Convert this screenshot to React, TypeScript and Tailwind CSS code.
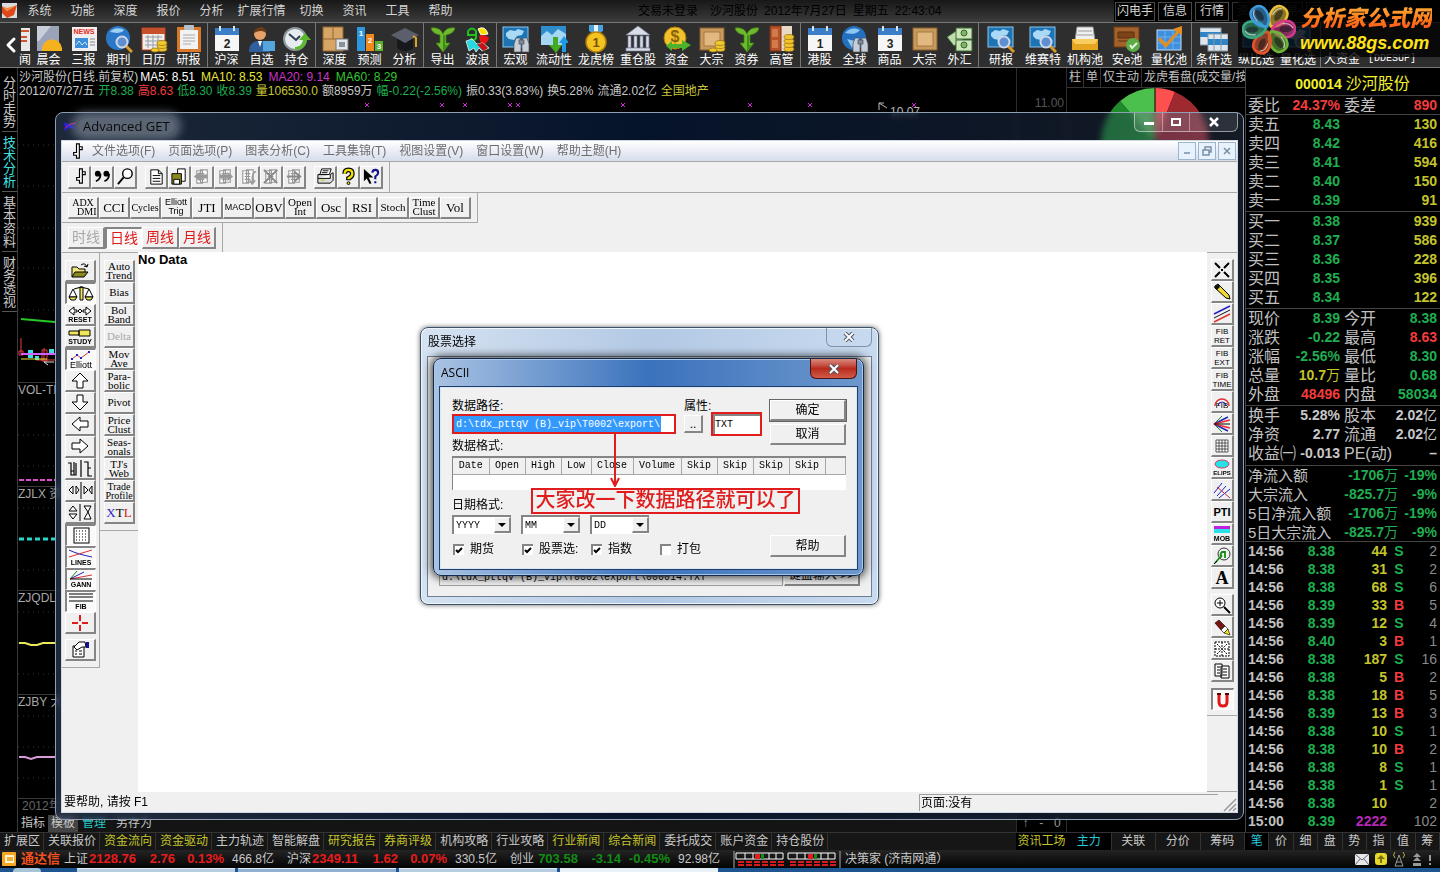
import type { ReactNode } from "react"
import clsx from "clsx"
import { ChevronLeft } from "lucide-react"

const RAISED = "border-t border-l border-r-2 border-b-2 border-t-white border-l-white border-r-[#858585] border-b-[#858585] bg-[#f0f0f0]"
const SUNKEN = "border-t-2 border-l-2 border-r border-b border-t-[#858585] border-l-[#858585] border-r-white border-b-white bg-[#fafafa]"
const SERIF = "font-[family-name:'Liberation_Serif','Noto_Sans_CJK_SC',serif]"
const MONO = "font-[family-name:'Liberation_Mono','Noto_Sans_CJK_SC',monospace]"

/* ---------- main toolbar icons (28 x 28) ---------- */

const Binoculars = () => (
  <g fill="#c8ced6" stroke="#4a525c" strokeWidth="0.7">
    <path d="M14 13h4l1 5v9h-7v-8z" />
    <path d="M21 13h4l2 6v8h-7v-9z" />
    <rect x="17" y="15" width="5" height="4" fill="#7f8a96" />
  </g>
)

const Magnifier = () => (
  <g fill="none">
    <path d="M21 21l6 6" stroke="#d89a28" strokeWidth="3" />
    <circle cx="17" cy="17" r="5.5" fill="#5f8fd0" stroke="#cdd8ea" strokeWidth="2" />
  </g>
)

const MapTile = () => (
  <>
    <rect x="1" y="2" width="25" height="20" fill="#1d74b4" stroke="#8cc4ec" />
    <path d="M4 8l4-3 5 1 3-2 6 2-2 4-5 1-3 4-5-1-3-3z" fill="#a9d9f5" />
  </>
)

const Coins = () => (
  <g fill="#f0c830" stroke="#93700d" strokeWidth="0.7">
    <ellipse cx="22" cy="24" rx="5" ry="2.5" />
    <ellipse cx="22" cy="21" rx="5" ry="2.5" />
    <ellipse cx="22" cy="18" rx="5" ry="2.5" />
    <ellipse cx="15" cy="25" rx="4" ry="2" />
  </g>
)

const Crate = () => (
  <>
    <rect x="2" y="3" width="24" height="22" fill="#c89a5e" stroke="#8a5e2c" />
    <rect x="6" y="7" width="16" height="14" fill="#e0b880" stroke="#a97a42" />
  </>
)

const Calendar = ({ day }: { day: string }) => (
  <>
    <rect x="2" y="4" width="24" height="22" fill="#f6f6f6" />
    <rect x="2" y="3" width="24" height="7" fill="#3d7ecb" />
    <path d="M7 1v5M21 1v5" stroke="#d8e6f6" strokeWidth="2" />
    <text x="14" y="23" textAnchor="middle" fontSize="12" fontWeight="bold" fill="#222">
      {day}
    </text>
  </>
)

const Sprout = () => (
  <>
    <path d="M2 3c6-1 10 1 12 6 2-5 6-7 12-6-1 4-4 6-9 7v8h4l-7 9-7-9h4v-8C6 9 3 7 2 3z" fill="#6fb92c" stroke="#3c7d14" strokeWidth="0.7" />
    <path d="M14 10h2v10h3l-5 6z" fill="#3e8f17" />
  </>
)

const toolIcons: Record<string, ReactNode> = {
  weather: (
    <>
      <rect x="2" y="1" width="22" height="25" fill="#9aa3b8" />
      <path d="M2 1h14L4 16H2z" fill="#c9cedb" />
      <path d="M7 26a10 10 0 0 1 20-3v3z" fill="#f5b21d" />
    </>
  ),
  news: (
    <>
      <rect x="2" y="2" width="25" height="24" fill="#efefef" />
      <rect x="4" y="3" width="21" height="7" fill="#fbe6e4" />
      <text x="14" y="9" textAnchor="middle" fontSize="7" fontWeight="bold" fill="#d9312a">NEWS</text>
      <rect x="5" y="13" width="13" height="10" fill="#3b8fd8" />
      <path d="M6 20l3-4 3 4 3-3 2 3" stroke="#cfe8fb" fill="none" />
      <path d="M20 14h5M20 17h5M20 20h5" stroke="#888" />
    </>
  ),
  globeSearch: (
    <>
      <circle cx="13" cy="13" r="12" fill="#2b78c8" />
      <path d="M5 7c4-5 11-4 14-2-3 4-9 3-14 2z" fill="#9ed0f4" />
      <Magnifier />
    </>
  ),
  calendarCoins: (
    <>
      <rect x="2" y="3" width="23" height="22" fill="#f3ede6" stroke="#b33b1e" />
      <rect x="2" y="3" width="23" height="6" fill="#c4512c" />
      <path d="M5 12h17M5 16h17M5 20h17M8 10v13M13 10v13M18 10v13" stroke="#8f9db0" />
      <Coins />
    </>
  ),
  clipboard: (
    <>
      <rect x="2" y="2" width="24" height="25" fill="#d9772a" />
      <rect x="5" y="5" width="18" height="19" fill="#f2f2f2" />
      <path d="M8 10h12M8 13h12M8 16h12M8 19h8" stroke="#aaa" />
      <rect x="9" y="0" width="10" height="5" rx="1" fill="#b9bfc6" />
    </>
  ),
  cal2: <Calendar day="2" />,
  cal1: <Calendar day="1" />,
  cal3: <Calendar day="3" />,
  person: (
    <>
      <path d="M1 27c0-9 5-11 11-11s10 3 10 11z" fill="#2f5f9c" />
      <path d="M10 16l2 6 2-6z" fill="#fff" />
      <circle cx="12" cy="9" r="6" fill="#e6a268" />
      <path d="M6 8c0-6 12-9 12 0-4-3-8-2-12 0z" fill="#6b3c17" />
      <rect x="15" y="16" width="12" height="10" fill="#54a6dd" />
    </>
  ),
  clock: (
    <>
      <circle cx="12" cy="14" r="11" fill="#e5ebee" stroke="#8b979d" strokeWidth="2" />
      <path d="M6 9l7 6 4-4" stroke="#2c3a55" strokeWidth="2" fill="none" />
      <path d="M12 25c7 0 11-4 12-10h4l-6-7-6 7h4c-1 5-4 7-8 7z" fill="#5bb82f" />
    </>
  ),
  cabinet: (
    <>
      <rect x="2" y="2" width="20" height="24" fill="#d7a566" stroke="#96672f" />
      <path d="M2 14h20M12 2v12" stroke="#96672f" />
      <rect x="15" y="14" width="12" height="11" fill="#e4e6e8" stroke="#777" />
      <rect x="18" y="17" width="6" height="5" fill="#8a9299" />
    </>
  ),
  bars123: (
    <>
      <rect x="1" y="2" width="8" height="24" fill="#2f96de" />
      <rect x="10" y="9" width="8" height="17" fill="#f08a1d" />
      <rect x="19" y="16" width="8" height="10" fill="#5cb030" />
      <g fontSize="8" fontWeight="bold" fill="#fff" textAnchor="middle">
        <text x="5" y="11">1</text>
        <text x="14" y="18">2</text>
        <text x="23" y="24">3</text>
      </g>
    </>
  ),
  cap: (
    <>
      <path d="M6 14v9c4 4 12 4 16 0v-9z" fill="#17181c" />
      <path d="M0 10L14 3l14 7-14 8z" fill="#5a5f6b" />
      <path d="M22 11l3 2v9" stroke="#d8a428" strokeWidth="2" fill="none" />
    </>
  ),
  sprout: <Sprout />,
  wave: (
    <>
      <path d="M4 6q4-5 8 0v7q-2 4-5 0M4 6v4h8" stroke="#1fc41f" strokeWidth="2" fill="none" />
      <path d="M14 4q7-4 10 5l-7 1z" fill="#ffe100" stroke="#fff" />
      <path d="M15 11q6-3 10 2-2 7-8 7z" fill="#e81414" />
      <path d="M2 16l6-2 5 5 6-1 6 5-7 3-3-3-3 4-2-4-5 3z" fill="#27d8e0" stroke="#fff" strokeWidth="0.7" />
      <path d="M13 19l6 7 5-3-5-5z" fill="#c81010" />
    </>
  ),
  mapBino: (
    <>
      <MapTile />
      <Binoculars />
    </>
  ),
  flow: (
    <>
      <rect x="1" y="1" width="25" height="19" fill="#2f8dcd" />
      <path d="M1 11l6-5 5 4 6-6 8 5v11H1z" fill="#a3d7f3" />
      <path d="M13 12h5v8h4l-6 8-7-8h4z" fill="#43ab22" />
      <path d="M22 27v-9h-3l5-7 5 7h-3v9z" fill="#1f9ae8" />
    </>
  ),
  medal: (
    <>
      <path d="M7 0h14v6l-7 4-7-4z" fill="#4aa3dd" />
      <path d="M12 0h4v9h-4z" fill="#e9f3fb" />
      <circle cx="14" cy="17" r="10" fill="#f3c321" stroke="#b88208" strokeWidth="1.5" />
      <text x="14" y="22" textAnchor="middle" fontSize="13" fontWeight="bold" fill="#7b5200">1</text>
    </>
  ),
  bank: (
    <g fill="#d8dde8" stroke="#727d96" strokeWidth="0.7">
      <path d="M14 1L2 10h24z" />
      <path d="M4 11h3v12H4zM10 11h3v12h-3zM16 11h3v12h-3zM22 11h3v12h-3z" />
      <path d="M2 23h24v3H2z" />
    </g>
  ),
  dollar: (
    <>
      <circle cx="12" cy="13" r="11" fill="#f1c22b" stroke="#a97b0a" />
      <text x="12" y="17" textAnchor="middle" fontSize="16" fontWeight="bold" fill="#8c6208">$</text>
      <path d="M3 21l6-5v3h10v-4l9 5-9 6v-3H9v3z" fill="#4fb22c" />
    </>
  ),
  crateCoins: (
    <>
      <Crate />
      <Coins />
    </>
  ),
  crate: <Crate />,
  door: (
    <>
      <rect x="2" y="1" width="22" height="25" fill="#e8d8c4" />
      <path d="M2 1h11v25H2z" fill="#b6532a" stroke="#7d3114" />
      <path d="M4 4h6v8H4zM4 15h6v8H4z" fill="#d17a4c" />
      <g fill="#f0c22c" stroke="#96700c" strokeWidth="0.7">
        <ellipse cx="21" cy="24" rx="5" ry="2.5" />
        <ellipse cx="21" cy="20" rx="5" ry="2.5" />
        <ellipse cx="21" cy="16" rx="5" ry="2.5" />
        <ellipse cx="21" cy="12" rx="5" ry="2.5" />
      </g>
    </>
  ),
  globeBino: (
    <>
      <circle cx="13" cy="13" r="12" fill="#2470c0" />
      <path d="M4 8c5-6 11-5 15-3-4 5-9 4-15 3zM6 14l8 2-3 7z" fill="#8dc6ef" />
      <Binoculars />
    </>
  ),
  money: (
    <g stroke="#376a2c">
      <path d="M1 12L16 2l6 9L8 21z" fill="#bfdcae" />
      <rect x="10" y="3" width="16" height="11" fill="#cfe6bd" />
      <rect x="10" y="15" width="16" height="11" fill="#cfe6bd" />
      <circle cx="18" cy="8" r="3" fill="#7fb469" />
      <circle cx="18" cy="20" r="3" fill="#7fb469" />
    </g>
  ),
  mapSearch: (
    <>
      <MapTile />
      <Magnifier />
    </>
  ),
  tray: (
    <>
      <path d="M6 2h16l2 14H4z" fill="#f0f0f0" stroke="#999" />
      <path d="M7 6h14M6 10h16" stroke="#999" />
      <path d="M1 14h26v11H1z" fill="#e6a521" />
      <path d="M1 14h26l-3 5H4z" fill="#f8cd5c" />
    </>
  ),
  board: (
    <>
      <rect x="1" y="2" width="25" height="20" fill="#a3612c" stroke="#6d3a12" />
      <path d="M5 7h16v6H5zM5 16h10" stroke="#5a2e0d" fill="#7d4419" />
      <circle cx="20" cy="20" r="7" fill="#5cab46" />
      <path d="M17 20l2 3 5-5" stroke="#e8f6e0" strokeWidth="2" fill="none" />
    </>
  ),
  quant: (
    <>
      <rect x="2" y="5" width="24" height="20" fill="#3e8fe0" stroke="#c8def4" />
      <path d="M2 12h24M2 18h24M10 5v20M18 5v20" stroke="#6fb0ee" />
      <path d="M5 12l6 6L21 7l-3-3 9-3v9l-3-2-13 15-8-8z" fill="#e08e22" />
    </>
  ),
  sheets: (
    <>
      <rect x="0" y="3" width="21" height="17" fill="#dfe6ec" stroke="#8898a8" />
      <rect x="0" y="7" width="21" height="5" fill="#2f84c6" />
      <rect x="8" y="9" width="20" height="17" fill="#dfe6ec" stroke="#8898a8" />
      <rect x="8" y="14" width="20" height="6" fill="#2f84c6" />
      <path d="M14 9v17M21 9v17" stroke="#8898a8" />
    </>
  ),
}

type Tool = [icon: string, label: string]

const toolGroups: { wide?: boolean; tools: Tool[] }[] = [
  { tools: [["weather", "晨会"], ["news", "三报"], ["globeSearch", "期刊"], ["calendarCoins", "日历"], ["clipboard", "研报"]] },
  { tools: [["cal2", "沪深"], ["person", "自选"], ["clock", "持仓"]] },
  { tools: [["cabinet", "深度"], ["bars123", "预测"], ["cap", "分析"]] },
  { tools: [["sprout", "导出"], ["wave", "波浪"]] },
  {
    tools: [
      ["mapBino", "宏观"], ["flow", "流动性"], ["medal", "龙虎榜"], ["bank", "重仓股"],
      ["dollar", "资金"], ["crateCoins", "大宗"], ["sprout", "资券"], ["door", "高管"],
    ],
  },
  { tools: [["cal1", "港股"], ["globeBino", "全球"], ["cal3", "商品"], ["crate", "大宗"], ["money", "外汇"]] },
  { wide: true, tools: [["mapSearch", "研报"], ["mapSearch", "维赛特"], ["tray", "机构池"], ["board", "安e池"], ["quant", "量化池"]] },
  { wide: true, tools: [["sheets", "条件选"], ["mapSearch", "纵比选"], ["mapSearch", "量化选"]] },
]

function ToolButton({ icon, label, wide }: { icon: string; label: string; wide?: boolean }) {
  return (
    <button className={clsx("flex shrink-0 flex-col items-center pt-[2px]", wide || label.length > 2 ? "w-[42px]" : "w-[35px]")}>
      <svg viewBox="0 0 28 28" className="h-7 w-7">
        {toolIcons[icon]}
      </svg>
      <span className="h-[14px] whitespace-nowrap leading-[14px]">{label}</span>
    </button>
  )
}

function MenuBar() {
  const menus = ["系统", "功能", "深度", "报价", "分析", "扩展行情", "切换", "资讯", "工具", "帮助"]
  return (
    <header className="flex h-[22px] items-center bg-linear-to-b from-[#181818] to-[#3c3c3c] text-[#d4d4d4]">
      <svg viewBox="0 0 16 16" className="ml-[2px] h-4 w-4">
        <rect width="15" height="15" fill="#d9dde0" />
        <path d="M0 3l5 5 10-6-3 10-7 3-5-5z" fill="#e0481a" />
        <path d="M0 3l5 5 10-6-10 3z" fill="#f58a3a" />
      </svg>
      <nav className="flex">
        {menus.map((menu) => (
          <button key={menu} className={menu.length > 2 ? "w-[57px]" : "w-[43px]"}>
            {menu}
          </button>
        ))}
      </nav>
      <div className="ml-[176px] flex flex-1 gap-[6px] whitespace-nowrap text-black">
        <span className="mr-[6px]">交易未登录</span>
        <span>沙河股份</span>
        <span>2012年7月27日</span>
        <span>星期五</span>
        <span>22:43:04</span>
      </div>
      <div className="flex h-full w-[326px] items-center gap-[3px] bg-black pl-px">
        {["闪电手", "信息", "行情"].map((label) => (
          <button key={label} className={clsx("h-[19px] border border-[#4a4a4a] leading-[17px]", label.length > 2 ? "px-px" : "px-1")}>
            {label}
          </button>
        ))}
        {["资讯", "交易", "网站"].map((label) => (
          <button key={label} className="h-[19px] border border-[#333] px-1 leading-[17px] text-[#444]">
            {label}
          </button>
        ))}
      </div>
    </header>
  )
}

function Toolbar() {
  return (
    <div className="flex h-[46px] overflow-hidden border-y border-[#777] bg-[#2e2e2e] text-white">
      <button aria-label="Scroll left" className="flex w-[17px] shrink-0 items-center justify-center pl-1">
        <ChevronLeft className="h-6 w-6 shrink-0" strokeWidth={3} />
      </button>
      <div className="flex w-[14px] shrink-0 flex-col items-end overflow-hidden pt-[2px]">
        <svg viewBox="18 0 10 28" className="h-7 w-[10px]">
          <rect x="18" y="3" width="9" height="23" fill="#e8e8e8" />
          <path d="M18 6h8M18 12h6M18 16h6" stroke="#d2542c" strokeWidth="2" />
        </svg>
        <span className="h-[14px] leading-[14px]">闻</span>
      </div>
      {toolGroups.map((group, i) => (
        <div key={i} className="mr-px flex border-r border-[#777] pr-px">
          {group.tools.map(([icon, label], j) => (
            <ToolButton key={j} icon={icon} label={label} wide={group.wide} />
          ))}
        </div>
      ))}
      <div className="flex items-end gap-2 whitespace-nowrap pb-px pl-[2px] leading-[14px]">
        <span>大资金</span>
        <span className={clsx(MONO, "text-[10px]")}>[DDESUP]</span>
      </div>
    </div>
  )
}

function SiteLogo() {
  const petals = [
    { angle: 35, color: "#e8c03a" },
    { angle: 90, color: "#d4388a" },
    { angle: 145, color: "#6fb53a" },
    { angle: 205, color: "#e5532c" },
    { angle: 268, color: "#3aa87c" },
    { angle: 325, color: "#3d9be0" },
  ]
  return (
    <div className="absolute top-0 right-0 flex h-[57px] w-[202px] items-center gap-1 bg-black/80 pl-1">
      <svg viewBox="-26 -26 52 52" className="h-[54px] w-[54px] shrink-0">
        {petals.map(({ angle, color }) => (
          <g key={color} transform={`rotate(${angle})`}>
            <path d="M0-3C-10-9-11-25 0-25s10 16 0 22z" fill={color} fillOpacity="0.6" stroke={color} strokeWidth="2.5" />
            <ellipse cy="-16" rx="3" ry="6" fill="#1a1a1a" fillOpacity="0.6" />
            <path d="M-5-13q-1-8 4-10" fill="none" stroke="#fff" strokeOpacity="0.6" strokeWidth="1.2" />
          </g>
        ))}
      </svg>
      <div className="whitespace-nowrap">
        <div className="bg-linear-to-b from-[#ffb03a] via-[#ff7a1a] to-[#ff4a1a] bg-clip-text text-[22px] leading-7 font-black text-transparent italic">
          分析家公式网
        </div>
        <div className="text-[18px] leading-5 font-bold text-[#ffe21a] italic">www.88gs.com</div>
      </div>
    </div>
  )
}

/* ---------- chart side ---------- */

function SideTabs() {
  const tabs = ["分时走势", "技术分析", "基本资料", "财务透视"]
  return (
    <nav className="flex w-[18px] shrink-0 flex-col border-r border-[#3a3a3a] pt-1 pl-[2px]">
      {tabs.map((tab, i) => (
        <button
          key={tab}
          className={clsx(
            "flex h-[60px] flex-col items-center justify-center border-b border-[#555] text-[13px] leading-[13px]",
            i === 1 ? "text-[#3fe0e0]" : "text-[#c8c8c8]",
          )}
        >
          {[...tab].map((char) => (
            <span key={char}>{char}</span>
          ))}
        </button>
      ))}
    </nav>
  )
}

const crosses = [367, 442, 465, 510, 518, 623, 750, 810, 914]

function IndicatorPane({ title, children }: { title: string; children?: ReactNode }) {
  return (
    <section className="h-[104px] shrink-0 border-t border-[#3a3a3a] text-[#a8a8a8]">
      <h2 className="h-4 overflow-hidden leading-[14px] whitespace-nowrap">{title}</h2>
      <svg className="h-[86px] w-full">
        <path d="M0 5h1000M0 36h1000M0 67h1000" stroke="#333" strokeDasharray="1 4" />
        {children}
      </svg>
    </section>
  )
}

function ChartArea() {
  return (
    <div className="flex min-w-0 flex-1 flex-col pt-[2px]">
      <div className="flex h-[14px] gap-[6px] pl-px leading-[14px] whitespace-nowrap text-white">
        <span className="-mr-1 text-[#c8c8c8]">沙河股份(日线.前复权)</span>
        <span>MA5: 8.51</span>
        <span className="text-[#e8e83a]">MA10: 8.53</span>
        <span className="text-[#c832c8]">MA20: 9.14</span>
        <span className="text-[#32c832]">MA60: 8.29</span>
      </div>
      <div className="flex h-[14px] gap-1 pl-px leading-[14px] whitespace-nowrap text-[#c8c8c8]">
        <span>2012/07/27/五</span>
        <span className="text-[#1fae50]">开8.38</span>
        <span className="text-[#f03c3c]">高8.63</span>
        <span className="text-[#1fae50]">低8.30</span>
        <span className="text-[#1fae50]">收8.39</span>
        <span className="text-[#c8c83a]">量106530.0</span>
        <span>额8959万</span>
        <span className="text-[#1fae50]">幅-0.22(-2.56%)</span>
        <span>振0.33(3.83%)</span>
        <span>换5.28%</span>
        <span>流通2.02亿</span>
        <span className="text-[#c8c83a]">全国地产</span>
      </div>
      <svg className="w-full flex-1 overflow-hidden">
        {crosses.map((x) => (
          <path key={x} d={`M${x - 20} 5l4 4m0-4l-4 4`} stroke="#d428d4" />
        ))}
        <path d="M861 12V5l8 5m-8-5h5" stroke="#bbb" fill="none" />
        <text x="872" y="18" fontSize="12" fill="#b8b8b8">10.07</text>
        <path d="M0 47h1000M0 88h1000M0 130h1000M0 170h1000M0 212h1000" stroke="#333" strokeDasharray="1 4" />
        <path d="M3 221l34 3" stroke="#28c828" strokeWidth="2" />
        <path d="M3 240v16M26 250v14M18 262h19" stroke="#e83c3c" />
        <path d="M1 253h4v4H1zM24 252h5v11h-5z" fill="none" stroke="#e83c3c" />
        <path d="M10 252h5v8h-5zM31 251h5v4h-5zM17 258h4v4h-4z" fill="#3fe0e0" />
        <path d="M3 256h34" stroke="#d060ff" strokeWidth="2" />
        <path d="M3 261h26" stroke="#e8e83a" />
        <path d="M26 264l4 3m-4-3h10" stroke="#ddd" />
      </svg>
      <IndicatorPane title="VOL-TI">
        <path d="M1 81h36" stroke="#e04ad0" strokeWidth="2" strokeDasharray="5 2" />
      </IndicatorPane>
      <IndicatorPane title="ZJLX 资">
        <path d="M1 36h36" stroke="#27d8c8" strokeWidth="3" strokeDasharray="5 3" />
      </IndicatorPane>
      <IndicatorPane title="ZJQDL">
        <path d="M1 36h6l6 2h6l6-2h12" stroke="#e8e85a" strokeWidth="2" fill="none" />
      </IndicatorPane>
      <IndicatorPane title="ZJBY 大">
        <path d="M1 46h6l6 2 6-2h18" stroke="#d89ad8" strokeWidth="2" fill="none" />
      </IndicatorPane>
      <div className="h-[17px] shrink-0 border-t border-[#3a3a3a] pl-1 leading-[15px] text-[#666]">2012年</div>
      <div className="flex h-[17px] shrink-0 bg-[#141414] leading-[15px] text-[#c8c8c8]">
        <button className="w-[30px] bg-black">指标</button>
        <button className="w-[30px] bg-[#444]">模板</button>
        <button className="w-[32px] text-[#27c8c8]">管理</button>
        <button className="px-[6px]">另存为</button>
      </div>
    </div>
  )
}

function SidePanel() {
  return (
    <div className="flex shrink-0">
      <div className="flex w-[51px] flex-col border-r border-l border-[#2c2c2c] pt-[27px] text-[#555]">
        <div className="pr-[2px] text-right leading-4">11.00</div>
        <div className="mt-auto flex h-[17px] justify-around leading-[17px] text-[#999]">
          <button>↑</button>
          <button>-</button>
          <button>0</button>
        </div>
      </div>
      <div className="w-[178px] overflow-hidden">
        <div className="flex h-5 border-b border-[#333] leading-[19px] whitespace-nowrap text-[#c0c0c0]">
          {["柱", "单", "仅主动", "龙虎看盘(成交量/按"].map((tab) => (
            <button key={tab} className="shrink-0 border-r border-[#333] px-[2px]">
              {tab}
            </button>
          ))}
        </div>
        <svg viewBox="0 0 178 110" className="w-full">
          <path d="M88 54V0A54 54 0 0 0 53 13z" fill="#4cc04c" />
          <path d="M88 54L53 13A54 54 0 0 0 88 108z" fill="#1e8a2c" />
          <path d="M88 54V0a54 54 0 0 1 20 4z" fill="#ff5050" />
          <path d="M88 54l20-50a54 54 0 0 1-20 104z" fill="#9e2a30" />
          <path d="M88 0v108" stroke="#000" />
        </svg>
      </div>
    </div>
  )
}

/* ---------- quote panel ---------- */

const G = "text-[#1fae50]"
const Y = "text-[#c4c42c]"
const R = "text-[#f43c3c]"
const W = "text-[#c8c8c8]"

const asks = [["卖五", "8.43", "130"], ["卖四", "8.42", "416"], ["卖三", "8.41", "594"], ["卖二", "8.40", "150"], ["卖一", "8.39", "91"]]
const bids = [["买一", "8.38", "939"], ["买二", "8.37", "586"], ["买三", "8.36", "228"], ["买四", "8.35", "396"], ["买五", "8.34", "122"]]

type Pair = [string, string, string, string, string, string]

const summary: Pair[] = [
  ["现价", "8.39", G, "今开", "8.38", G],
  ["涨跌", "-0.22", G, "最高", "8.63", R],
  ["涨幅", "-2.56%", G, "最低", "8.30", G],
  ["总量", "10.7万", Y, "量比", "0.68", G],
  ["外盘", "48496", R, "内盘", "58034", G],
]
const basics: Pair[] = [
  ["换手", "5.28%", W, "股本", "2.02亿", W],
  ["净资", "2.77", W, "流通", "2.02亿", W],
  ["收益㈠", "-0.013", W, "PE(动)", "–", W],
]
const flows = [
  ["净流入额", "-1706万", "-19%"],
  ["大宗流入", "-825.7万", "-9%"],
  ["5日净流入额", "-1706万", "-19%"],
  ["5日大宗流入", "-825.7万", "-9%"],
]
const ticks = [
  ["14:56", "8.38", "44", "S", "2"],
  ["14:56", "8.38", "31", "S", "2"],
  ["14:56", "8.38", "68", "S", "6"],
  ["14:56", "8.39", "33", "B", "5"],
  ["14:56", "8.39", "12", "S", "4"],
  ["14:56", "8.40", "3", "B", "1"],
  ["14:56", "8.38", "187", "S", "16"],
  ["14:56", "8.38", "5", "B", "2"],
  ["14:56", "8.38", "18", "B", "5"],
  ["14:56", "8.39", "13", "B", "3"],
  ["14:56", "8.38", "10", "S", "1"],
  ["14:56", "8.38", "10", "B", "2"],
  ["14:56", "8.38", "8", "S", "1"],
  ["14:56", "8.38", "1", "S", "1"],
  ["14:56", "8.38", "10", "", "2"],
  ["15:00", "8.39", "2222", "", "102"],
]

// bold digits, with the unit (万, 亿) in regular weight
function Amount({ value, className }: { value: string; className?: string }) {
  const unit = /[万亿]$/.test(value) ? value.slice(-1) : ""
  return (
    <span className={clsx("text-[14px]", className)}>
      <b>{unit ? value.slice(0, -1) : value}</b>
      {unit}
    </span>
  )
}

function PairRow({ row: [label, value, color, label2, value2, color2] }: { row: Pair }) {
  return (
    <div className="flex h-[19px] items-center leading-[19px] whitespace-nowrap">
      <span className="text-[16px]">{label}</span>
      <Amount value={value} className={clsx("ml-auto", color)} />
      <span className="flex w-[97px] items-center pl-1">
        <span className="text-[16px]">{label2}</span>
        <Amount value={value2} className={clsx("ml-auto", color2)} />
      </span>
    </div>
  )
}

function OrderRows({ rows }: { rows: string[][] }) {
  return (
    <table className="w-full border-collapse">
      <tbody>
        {rows.map(([label, price, volume]) => (
          <tr key={label} className="h-[19px] leading-[19px]">
            <th scope="row" className="w-[42px] p-0 text-left text-[16px] font-normal">{label}</th>
            <td className={clsx("w-[50px] p-0 text-right text-[14px] font-bold", G)}>{price}</td>
            <td className={clsx("p-0 text-right text-[14px] font-bold", Y)}>{volume}</td>
          </tr>
        ))}
      </tbody>
    </table>
  )
}

function QuotePanel() {
  return (
    <aside className="w-[195px] shrink-0 divide-y divide-[#444] border-l border-[#444] text-[#c0c0c0] [&>*]:pr-[3px] [&>*]:pl-[2px]">
      <h1 className="flex h-7 items-center justify-center gap-1 pt-1 text-[#f0f02c]">
        <span className="ml-5 text-[14px] font-bold">000014</span>
        <span className="text-[16px]">沙河股份</span>
      </h1>
      <PairRow row={["委比", "24.37%", R, "委差", "890", R]} />
      <div className="h-[97px]"><OrderRows rows={asks} /></div>
      <div className="h-[97px]"><OrderRows rows={bids} /></div>
      <div className="h-[97px]">
        {summary.map((row) => <PairRow key={row[0]} row={row} />)}
      </div>
      <div className="h-[60px]">
        {basics.map((row) => <PairRow key={row[0]} row={row} />)}
      </div>
      <div className="h-[76px]">
        {flows.map(([label, amount, percent]) => (
          <div key={label} className="flex h-[19px] items-center leading-[19px] whitespace-nowrap">
            <span className="text-[15px]">{label}</span>
            <Amount value={amount} className={clsx("ml-auto", G)} />
            <Amount value={percent} className={clsx("w-[39px] text-right", G)} />
          </div>
        ))}
      </div>
      <div>
        <table className="w-full border-collapse text-[14px] font-bold">
          <tbody>
            {ticks.map(([time, price, volume, side, count], i) => (
              <tr key={i} className="h-[18px] leading-[18px]">
                <td className="w-[43px] p-0">{time}</td>
                <td className={clsx("w-[44px] p-0 text-right", G)}>{price}</td>
                <td className={clsx("w-[52px] p-0 text-right", time === "15:00" ? "text-[#b428b4]" : Y)}>{volume}</td>
                <td className={clsx("w-[24px] p-0 text-center", side === "B" ? R : G)}>{side}</td>
                <td className="p-0 text-right font-normal text-[#8a8a8a]">{count}</td>
              </tr>
            ))}
          </tbody>
        </table>
      </div>
    </aside>
  )
}

/* ---------- footer ---------- */

const footerTabs = [
  "扩展区", "关联报价", "资金流向", "资金驱动", "主力轨迹", "智能解盘", "研究报告", "券商评级",
  "机构攻略", "行业攻略", "行业新闻", "综合新闻", "委托成交", "账户资金", "持仓股份",
]
const highlighted = ["资金流向", "资金驱动", "研究报告", "券商评级", "行业新闻", "综合新闻"]

const indices = [
  { name: "上证", value: "2128.76", change: "2.76", percent: "0.13%", amount: "466.8亿", up: true },
  { name: "沪深", value: "2349.11", change: "1.62", percent: "0.07%", amount: "330.5亿", up: true },
  { name: "创业", value: "703.58", change: "-3.14", percent: "-0.45%", amount: "92.98亿", up: false },
]

function Footer() {
  return (
    <footer className="text-[#c8c8c8]">
      <div className="flex h-[18px] border-t border-[#333] bg-[#161616] leading-[15px] whitespace-nowrap">
        <nav className="flex flex-1">
          {footerTabs.map((tab) => (
            <button
              key={tab}
              className={clsx("border-r border-[#333] pr-[3px] pl-1", highlighted.includes(tab) && "text-[#c4c42c]")}
            >
              {tab}
            </button>
          ))}
        </nav>
        <button className="w-[51px] bg-black text-[#c4c42c]">资讯工场</button>
        <div className="flex w-[178px]">
          {["主力", "关联", "分价", "筹码"].map((tab, i) => (
            <button key={tab} className={clsx("flex-1 border-r border-[#333]", i === 0 && "bg-black text-[#27c8d8]")}>
              {tab}
            </button>
          ))}
        </div>
        <div className="flex w-[195px]">
          {["笔", "价", "细", "盘", "势", "指", "值", "筹"].map((tab, i) => (
            <button key={tab} className={clsx("flex-1 border-r border-[#333]", i === 0 && "bg-black text-[#27c8d8]")}>
              {tab}
            </button>
          ))}
        </div>
      </div>
      <div className="flex h-[18px] items-center bg-linear-to-b from-[#242424] to-[#050505] leading-4 whitespace-nowrap">
        <svg viewBox="0 0 14 14" className="ml-[2px] h-[14px] w-[14px]">
          <rect width="14" height="14" rx="1" fill="#f5a623" />
          <rect x="3" y="3" width="9" height="8" fill="#fff3d0" />
          <rect x="5" y="5" width="6" height="4" fill="#f0b040" />
        </svg>
        <strong className="mr-1 ml-[5px] text-[13px] text-[#f4511e]">通达信</strong>
        {indices.map(({ name, value, change, percent, amount, up }) => (
          <div key={name} className="flex w-[223px]">
            <span className="w-[25px]">{name}</span>
            <span className={clsx("flex text-[13px] font-bold", up ? "text-[#e81c1c]" : "text-[#128c12]")}>
              <span className="w-[46px] text-center">{value}</span>
              <span className="w-[40px] text-right">{change}</span>
              <span className="w-[49px] text-right">{percent}</span>
            </span>
            <span className="ml-2">{amount}</span>
          </div>
        ))}
        <svg viewBox="0 0 108 18" className="h-[18px] w-[108px]">
          <path d="M1 1v17M107 1v17" stroke="#aaa" />
          <path d="M3 3h47v6h-47zM55 3h47v6h-47zM12 3v6M20 3v6M36 3v6M43 3v6M64 3v6M72 3v6M88 3v6M95 3v6" fill="none" stroke="#fff" />
          <path d="M22 4h5v5h-5zM75 4h5v5h-5z" fill="#e81c1c" />
          <path d="M28 4h3v5h-3zM81 4h3v5h-3z" fill="#128c12" />
          <path d="M5 12h46M5 15h46M57 12h46M57 15h46" stroke="#d41c1c" strokeWidth="2" strokeDasharray="6 2" />
        </svg>
        <span className="ml-1">决策家 (济南网通）</span>
        <svg viewBox="0 0 84 18" className="mr-px ml-auto h-[18px] w-[84px]">
          <rect y="4" width="14" height="11" fill="#e8e8e8" />
          <path d="M0 4l7 6 7-6M0 15l5-6M14 15l-5-6" stroke="#667" fill="none" />
          <rect x="20" y="3" width="12" height="12" rx="3" fill="#e8d82c" />
          <path d="M26 5l4 4h-3v4h-2V9h-3z" fill="#7a7010" />
          <path d="M44 5l-4 11h8zM41 12h6" stroke="#999" fill="none" />
          <path d="M40 2q-3 3 0 6M48 2q3 3 0 6" stroke="#b8b040" fill="none" />
          <path d="M62 3l4 4h-8zM62 7l4 4h-8zM58 13h8v3h-8z" fill="#999" />
          <path d="M74 5h2v6h-2zM74 13h2v2h-2z" fill="#999" />
        </svg>
      </div>
      <div className="flex h-1 bg-[#1d5590]">
        <div className="ml-[13px] h-1 w-7 rounded-t-full bg-[#a8c4d8]" />
        <div className="ml-9 flex flex-1 gap-[3px] *:h-1 *:border-t *:border-[#e0ecf6]">
          <div className="w-[158px] bg-[#b8cde2]" />
          <div className="w-[158px] bg-[#8fb0d0]" />
          <div className="w-[158px] bg-[#b8cde2]" />
          <div className="w-[158px] bg-[#e8f0f8]" />
        </div>
      </div>
    </footer>
  )
}

/* ---------- Advanced GET window ---------- */

const Pin = () => <path d="M10 2h3v15h-3v-3H7v-3h3zM13 5h3v3h-3z" fill="#fff" stroke="#000" strokeWidth="1.2" />
const Pages = () => (
  <g fill="#fff" stroke="#999" strokeWidth="1.2">
    <path d="M4 4h6v13H4zM8 3h7v13H8z" />
    <path d="M6 7h6M6 10h6M6 13h6" />
  </g>
)

const barIcons: ReactNode[][] = [
  [
    <Pin />,
    <g fill="#000"><circle cx="5" cy="7" r="3" /><circle cx="14" cy="7" r="3" /><path d="M8 7q0 6-5 8M17 7q0 6-5 8" fill="none" stroke="#000" strokeWidth="1.8" /></g>,
    <g fill="#fff" stroke="#000" strokeWidth="1.5"><circle cx="12" cy="7" r="5" /><path d="M8 11l-6 7" strokeWidth="2" /></g>,
  ],
  [
    <path d="M4 3h8l4 4v11H4zM12 3v4h4M6 9h8M6 12h8M6 15h8" fill="#fff" stroke="#000" />,
    <g stroke="#000"><path d="M8 2h8v13H8z" fill="#fff" /><path d="M2 7h10v11H2z" fill="#8a8a20" /><path d="M4 13h6v5H4z" fill="#fff" /></g>,
    <g><Pages /><path d="M1 10l6-5v3h8v4H7v3z" fill="#999" /></g>,
    <g><Pages /><path d="M18 10l-6-5v3H4v4h8v3z" fill="#999" /></g>,
    <g><Pages /><path d="M18 5q-5 0-4 12M11 14l3 4 3-4" fill="none" stroke="#999" strokeWidth="1.5" /></g>,
    <g><Pages /><path d="M2 3l14 14M16 3L2 17" stroke="#888" strokeWidth="2" /></g>,
    <g><Pages /><path d="M2 10h13M10 5l6 5-6 5" fill="none" stroke="#888" strokeWidth="2" /></g>,
  ],
  [
    <g fill="#fff" stroke="#000"><path d="M6 2h10l-2 6H4z" /><path d="M2 8h13l3-2v8l-3 3H2z" fill="#ddd" /><path d="M2 12h13v-4M7 4h6M6 6h6" /><path d="M5 14h4" stroke="#c8c800" /></g>,
    <g fill="none"><path d="M6 7q0-4 4-4t4 4q0 3-4 5v2" stroke="#000" strokeWidth="5" /><path d="M6 7q0-4 4-4t4 4q0 3-4 5v1" stroke="#f0e000" strokeWidth="2.5" /><circle cx="10" cy="17" r="1.5" fill="#f0e000" stroke="#000" /></g>,
    <g><path d="M2 2v13l3-3 3 6 2-1-3-6h5z" fill="#000" /><path d="M11 6q0-3 3-3t3 3q0 2-3 4v3M14 15v2" fill="none" stroke="#10108c" strokeWidth="2.2" /></g>,
  ],
]

const studies = ["ADX\n   DMI", "CCI", "Cycles", "Elliott\nTrig", "JTI", "MACD", "OBV", "Open\nInt", "Osc", "RSI", "Stoch", "Time\nClust", "Vol"]
const periods = ["时线", "日线", "周线", "月线"]
const studyColumn = [
  "Auto\nTrend", "Bias", "Bol\nBand", "Delta", "Mov\nAve", "Para-\nbolic", "Pivot", "Price\nClust", "Seas-\nonals", "TJ's\nWeb", "Trade\nProfile", "XTL",
]

const leftTools: { name: string; caption?: string; pressed?: boolean; icon: ReactNode }[] = [
  { name: "Open", icon: <g stroke="#000"><path d="M5 15V5h5l2 2h6v3" fill="#f0e878" /><path d="M5 15l3-5h13l-4 5z" fill="#8a8a20" /><path d="M14 3q4-3 6 2m-3-1l3 1 1-3" fill="none" /></g> },
  { name: "Scales", pressed: true, icon: <g stroke="#000" fill="#f0e85a"><path d="M12 2h3v13h-3zM6 4l7-2 8 2" /><path d="M5 4l-4 8h8zM21 4l-4 8h8z" fill="#fff" /><path d="M1 12h8l-2 3H3zM17 12h8l-2 3h-4z" /></g> },
  { name: "Reset", caption: "RESET", icon: <path d="M7 1L2 5l5 4V6h3V4H7zM19 1l5 4-5 4V6h-3V4h3zM11 5l2-2 2 2-2 2z" fill="#fff" stroke="#000" /> },
  { name: "Study", caption: "STUDY", icon: <path d="M2 3h10v4H2zM12 2h11v6H12z" fill="#f0e85a" stroke="#000" /> },
  { name: "Elliott", caption: "Elliott", pressed: true, icon: <g><path d="M4 8l5-4 4 3 8-6" stroke="#e03030" fill="none" /><path d="M3 7h2v2H3zM8 3h2v2H8zM12 6h2v2h-2zM20 0h2v2h-2z" fill="#2020c0" /></g> },
  { name: "Up", icon: <path d="M13 1l8 8h-5v7h-6V9H5z" fill="#fff" stroke="#000" /> },
  { name: "Down", icon: <path d="M13 16L5 8h5V1h6v7h5z" fill="#fff" stroke="#000" /> },
  { name: "Left", icon: <path d="M5 8l8-7v4h8v6h-8v4z" fill="#fff" stroke="#000" /> },
  { name: "Right", icon: <path d="M21 8l-8-7v4H5v6h8v4z" fill="#fff" stroke="#000" /> },
  { name: "Bars", icon: <path d="M1 3h3v8h3M7 2v13M4 7v8h5V3M14 0v17M17 2h4v14h4M21 8h3" fill="none" stroke="#000" strokeWidth="1.2" /> },
  { name: "Spread", icon: <path d="M6 4v8L2 8zM9 4v8l3-4zM14 0v17M17 4v8l4-4zM25 4v8l-3-4z" fill="#fff" stroke="#000" /> },
  { name: "Scale", icon: <path d="M2 7l4-5 4 5zM2 10h8l-4 5zM13 0v17M17 2h7l-3 6zM17 15h7l-3-7z" fill="#fff" stroke="#000" /> },
  { name: "Grid", pressed: true, icon: <g><rect x="6" y="1" width="15" height="15" fill="#fff" stroke="#000" /><path d="M8 4h12M8 7h12M8 10h12M8 13h12" stroke="#000" strokeDasharray="1 2" /></g> },
  { name: "Lines", caption: "LINES", pressed: true, icon: <g fill="none"><path d="M1 1q8 4 23 7" stroke="#2020c0" /><path d="M1 8L24 1" stroke="#e03030" /></g> },
  { name: "Gann", caption: "GANN", pressed: true, icon: <g><path d="M2 8L9 0" stroke="#128c12" /><path d="M2 8l14-7" stroke="#2020c0" /><path d="M2 8l22-4" stroke="#e03030" /><path d="M2 8h22" stroke="#000" /></g> },
  { name: "Fib", caption: "FIB", pressed: true, icon: <path d="M1 1h24M1 4h24M1 8h24" stroke="#000" /> },
]

const fork = <g fill="none"><path d="M1 12L9 2M4 15l9-10M6 17l11-9" stroke="#2020c0" /><path d="M4 6l13 11" stroke="#c03050" /></g>

const rightTools: { name: string; text?: string; icon?: ReactNode }[] = [
  { name: "Cross", icon: <path d="M2 2l5 5M16 2l-5 5M2 16l5-5M16 16l-5-5M8 9h2M9 8v2" stroke="#000" strokeWidth="2" /> },
  { name: "Pencil", icon: <g><path d="M2 3l3-2 11 11 1 4-4-1L2 5z" fill="#f0d830" stroke="#000" /><path d="M1 4l4-3 2 3-3 3z" fill="#111" /></g> },
  { name: "Trend lines", icon: <g><path d="M1 9L17 1" stroke="#2020c0" strokeWidth="1.5" /><path d="M1 13l16-8" stroke="#111" /><path d="M1 17l16-8" stroke="#e03030" strokeWidth="1.5" /></g> },
  { name: "Retracement", text: "FIB\nRET" },
  { name: "Extension", text: "FIB\nEXT" },
  { name: "Time", text: "FIB\nTIME" },
  { name: "Arc", icon: <g fill="none"><path d="M2 13a7 7 0 1 1 14 0" stroke="#e03030" strokeWidth="1.5" /><path d="M5 13a4 4 0 1 1 8 0" stroke="#2020c0" /><text x="9" y="15" textAnchor="middle" fontSize="8" fill="#000">FIB</text></g> },
  { name: "Fan", icon: <g><path d="M1 9L9 1M1 9l8 8" stroke="#128c12" /><path d="M1 9l14-7M1 9l14 7" stroke="#2020c0" strokeWidth="1.5" /><path d="M1 9l16-4M1 9l16 4" stroke="#e03030" strokeWidth="1.5" /><path d="M1 9h16" stroke="#000" /></g> },
  { name: "Grid", icon: <path d="M3 3h12v12H3zM6 3v12M9 3v12M12 3v12M3 6h12M3 9h12M3 12h12" fill="#fff" stroke="#333" strokeWidth="0.8" /> },
  { name: "Ellipse", icon: <g><ellipse cx="9" cy="5" rx="7" ry="4" fill="#27e0e8" stroke="#d04060" /><text x="9" y="16" textAnchor="middle" fontSize="6" fontWeight="bold">ELIPS</text></g> },
  { name: "Fork", icon: fork },
  { name: "PTI", text: "PTI" },
  { name: "MOB", icon: <g><path d="M1 1h16v3H1z" fill="#c020e0" /><path d="M1 4h16v4H1z" fill="#27e0e8" /><text x="9" y="16" textAnchor="middle" fontSize="7" fontWeight="bold">MOB</text></g> },
  { name: "Cycle", icon: <g fill="none"><circle cx="11" cy="7" r="6" stroke="#333" /><path d="M9 10q-3-2 0-5h3v6M9 8l-7 8" stroke="#128c12" strokeWidth="1.8" /><path d="M1 17l3-3" stroke="#000" /></g> },
  { name: "Text", text: "A" },
]

const rightTools2: { name: string; icon: ReactNode }[] = [
  { name: "Zoom", icon: <g fill="#fff" stroke="#000"><circle cx="7" cy="7" r="5" /><path d="M4 7h6M7 4v6" /><path d="M11 11l6 6" strokeWidth="2" /></g> },
  { name: "Eraser", icon: <g stroke="#000" strokeWidth="0.6"><path d="M2 5l4-3 6 6-4 4z" fill="#7a1414" /><path d="M12 8l-4 4 3 3 4-4z" fill="#fff" /><path d="M11 15l4-4 2 6z" fill="#f0e020" /></g> },
  { name: "Tile", icon: <path d="M2 2h14v14H2zM4 4l4 4M14 4l-4 4M4 14l4-4M14 14l-4-4M2 9h14M9 2v14" fill="#fff" stroke="#000" strokeDasharray="2 1" /> },
  { name: "Pages", icon: <path d="M2 2h7v12H2zM9 4h7v12H8V4M4 5h3M4 8h3M4 11h3M10 7h4M10 10h4M10 13h4" fill="#fff" stroke="#000" /> },
]

function StripButton({ children, label, pressed, className }: { children: ReactNode; label?: string; pressed?: boolean; className?: string }) {
  return (
    <button
      aria-label={label}
      className={clsx("flex shrink-0 flex-col items-center justify-center text-black", pressed ? SUNKEN : RAISED, className)}
    >
      {children}
    </button>
  )
}

function studyFont(study: string) {
  if (study === "MACD") return "font-[family-name:'Liberation_Sans',sans-serif] text-[9px]"
  if (study.startsWith("Elliott")) return "font-[family-name:'Liberation_Sans',sans-serif] text-[9px]"
  if (study.startsWith("ADX") || study === "Cycles") return "text-[10px]"
  if (study.includes("\n") || study.length > 4) return "text-[11px]"
  return "text-[13px]"
}

function AppToolbars() {
  return (
    <div>
      <div className="h-[31px] border-b border-[#a8a8a8]">
        <div className="flex h-full w-[328px] items-center gap-2 border-r border-[#a8a8a8] pl-[6px]">
          {barIcons.map((group, i) => (
            <div key={i} className="flex">
              {group.map((icon, j) => (
                <StripButton key={j} label="Tool" className="h-[23px] w-[23px]">
                  <svg viewBox="0 0 20 20" className="h-[19px] w-[19px]">{icon}</svg>
                </StripButton>
              ))}
            </div>
          ))}
        </div>
      </div>
      <div className="h-[30px] w-[416px] border-r border-b border-[#a8a8a8]">
        <div className="flex h-full items-center pl-[6px]">
          {studies.map((study) => (
            <StripButton key={study} className={clsx("h-[22px] w-[31px]", SERIF)}>
              <span className={clsx("leading-[9px] whitespace-pre", studyFont(study))}>{study}</span>
            </StripButton>
          ))}
        </div>
      </div>
      <div className="h-[29px]">
        <div className="flex h-full w-[161px] items-center border-r border-[#a8a8a8] pl-[6px]">
          {periods.map((period, i) => (
            <StripButton key={period} pressed={i === 1} className="h-[22px] w-[37px]">
              <span className={clsx("text-[14px] leading-4", i === 0 ? "text-[#a8a8a8]" : "text-[#e01818]")}>{period}</span>
            </StripButton>
          ))}
        </div>
      </div>
    </div>
  )
}

function LeftTools() {
  return (
    <div className="w-[38px] shrink-0 border-t border-[#a8a8a8]">
      <div className="flex flex-col border-r border-b border-[#a8a8a8] pt-[7px] pb-[6px] pl-[3px]">
        {leftTools.map(({ name, caption, pressed, icon }) => (
          <StripButton key={name} label={name} pressed={pressed} className="h-[22px] w-[31px]">
            <svg viewBox={caption ? "0 0 26 10" : "0 0 26 17"} className={clsx("w-[26px]", caption ? "h-[10px]" : "h-[17px]")}>
              {icon}
            </svg>
            {caption && <span className={clsx("h-2 leading-2", name === "Elliott" ? "text-[9px]" : "text-[7px] font-bold")}>{caption}</span>}
          </StripButton>
        ))}
        <StripButton label="Crosshair" className="h-[22px] w-[31px]">
          <svg viewBox="0 0 16 16" className="h-4 w-4">
            <path d="M8 0v6M8 10v6M0 8h6M10 8h6" stroke="#e01818" strokeWidth="2" />
          </svg>
        </StripButton>
        <StripButton label="Properties" className="mt-[5px] h-[22px] w-[31px]">
          <svg viewBox="0 0 18 17" className="h-[17px] w-[18px]">
            <path d="M2 5h11v11H2zM4 10h2M8 10h3M4 13h2M8 13h3" fill="#fff" stroke="#000" />
            <path d="M3 6l5-5h6l1 5h-4l-5 3z" fill="#fff" stroke="#000" />
            <path d="M15 1h3v6h-3z" fill="#10108c" />
          </svg>
        </StripButton>
      </div>
    </div>
  )
}

function StudyColumn() {
  return (
    <div className="w-[38px] shrink-0 border-t border-[#a8a8a8]">
      <div className="flex flex-col border-b border-[#a8a8a8] pt-[7px] pb-[6px] pl-1">
        {studyColumn.map((study) => (
          <StripButton key={study} className={clsx("h-[22px] w-[31px]", SERIF)}>
            {study === "XTL" ? (
              <span className="text-[13px] leading-4">
                <span className="text-[#2828c8]">X</span>T<span className="text-[#d01818]">L</span>
              </span>
            ) : (
              <span
                className={clsx(
                  "leading-[9px] whitespace-pre",
                  study.startsWith("Trade") ? "text-[10px]" : "text-[11px]",
                  study === "Delta" && "text-[#a8a8a8]",
                )}
              >
                {study}
              </span>
            )}
          </StripButton>
        ))}
      </div>
    </div>
  )
}

function RightTools() {
  return (
    <div className="w-[30px] shrink-0 border-y border-[#a8a8a8]">
      <div className="flex flex-col border-b border-[#a8a8a8] pt-[6px] pb-[5px] pl-1">
        {rightTools.map(({ name, text, icon }) => (
          <StripButton key={name} label={name} className="h-[22px] w-[23px]">
            {icon && <svg viewBox="0 0 18 18" className="h-[18px] w-[18px]">{icon}</svg>}
            {text?.includes("\n") && <span className="text-[8px] leading-[9px] whitespace-pre">{text}</span>}
            {text === "PTI" && <span className="text-[11px] font-bold">PTI</span>}
            {text === "A" && <span className={clsx("text-[18px] leading-4 font-bold", SERIF)}>A</span>}
          </StripButton>
        ))}
        <div className="h-[5px]" />
        {rightTools2.map(({ name, icon }) => (
          <StripButton key={name} label={name} className="h-[22px] w-[23px]">
            <svg viewBox="0 0 18 18" className="h-[18px] w-[18px]">{icon}</svg>
          </StripButton>
        ))}
        <StripButton label="Magnet" pressed className="mt-[6px] h-[22px] w-[23px]">
          <svg viewBox="0 0 16 16" className="h-4 w-4">
            <path d="M4 2v8q0 4 4 4t4-4V2" fill="none" stroke="#e01818" strokeWidth="3" />
            <path d="M2 1h4v2H2zM10 1h4v2h-4z" fill="#500" />
          </svg>
        </StripButton>
      </div>
    </div>
  )
}

function WindowControls() {
  return (
    <div className="flex h-[19px] rounded-b-md border border-t-0 border-white/50 bg-white/10 *:flex *:items-center *:justify-center">
      <button aria-label="Minimize" className="w-7 border-r border-white/40">
        <svg viewBox="0 0 12 10" className="h-[10px] w-3"><rect x="1" y="5" width="10" height="3" fill="#fff" /></svg>
      </button>
      <button aria-label="Maximize" className="w-[27px] border-r border-white/40">
        <svg viewBox="0 0 12 10" className="h-[10px] w-3"><rect x="2" y="2" width="8" height="6" fill="none" stroke="#fff" strokeWidth="2" /></svg>
      </button>
      <button aria-label="Close" className="w-[47px]">
        <svg viewBox="0 0 12 10" className="h-[10px] w-3"><path d="M2 1l8 8M10 1L2 9" stroke="#fff" strokeWidth="2.5" /></svg>
      </button>
    </div>
  )
}

function AppWindow() {
  const menus = ["文件选项(F)", "页面选项(P)", "图表分析(C)", "工具集锦(T)", "视图设置(V)", "窗口设置(W)", "帮助主题(H)"]
  return (
    <div className="absolute top-[112px] right-[196px] bottom-[52px] left-[55px] flex flex-col rounded-lg border border-[#8fa0b4] bg-linear-to-r from-[#2a3a52]/70 via-[#071834]/80 to-[#465878]/30 px-[5px] pb-[6px] text-black backdrop-blur-[3px]">
      <div className="flex h-[27px] shrink-0 justify-between">
        <div className="flex h-[26px] items-center">
          <svg viewBox="0 0 16 12" className="ml-px h-3 w-4">
            <path d="M1 2l5 2 9-1-5 3 4 3-7-1-5 3 1-4z" fill="#2020e0" />
            <path d="M3 8l5-4 6-1" stroke="#e02060" fill="none" />
          </svg>
          <span className="rounded-full bg-[#76808f]/70 px-[5px] font-[family-name:'Open_Sans',sans-serif] text-[13px] leading-4 text-[#0a0a0a] shadow-[0_0_8px_6px_rgba(118,128,143,0.7)]">
            Advanced GET
          </span>
        </div>
        <WindowControls />
      </div>
      <div className="flex min-h-0 flex-1 flex-col border border-[#cfd8e4] bg-[#f0f0f0]">
        <div className="flex h-[21px] shrink-0 items-center border-b border-[#a8a8a8] bg-linear-to-b from-white to-[#d6dcec] text-[#6d6d6d]">
          <svg viewBox="0 0 20 20" className="mr-[6px] ml-[5px] h-[19px] w-[19px]"><Pin /></svg>
          <nav className="flex gap-[13px]">
            {menus.map((menu) => (
              <button key={menu} className="leading-5">{menu}</button>
            ))}
          </nav>
          <div className="ml-auto flex gap-[2px] pr-px">
            {["M4 9h6", "M3 6h6v5H3zM5 6V3h6v5H9", "M4 4l6 6M10 4l-6 6"].map((d) => (
              <button key={d} aria-label="Child window" className="h-[18px] w-[18px] border border-[#9cb4cc] bg-[#e8f2fc]">
                <svg viewBox="0 0 14 14" className="m-auto h-[14px] w-[14px]"><path d={d} fill="none" stroke="#7a8ea4" strokeWidth="1.5" /></svg>
              </button>
            ))}
          </div>
        </div>
        <AppToolbars />
        <div className="flex min-h-0 flex-1">
          <LeftTools />
          <StudyColumn />
          <main className="flex-1 bg-white text-[13px] leading-4 font-bold">No Data</main>
          <RightTools />
        </div>
        <div className="flex h-5 shrink-0 items-center leading-5">
          <span className="flex-1 pl-[2px]">要帮助, 请按 F1</span>
          <span className="h-[17px] w-[299px] border-t border-l border-[#a0a0a0] pl-px leading-4">页面:没有</span>
          <svg viewBox="0 0 16 16" className="ml-[3px] h-4 w-4 self-end">
            <path d="M15 3L3 15M15 8l-7 7M15 12l-3 3" stroke="#999" strokeWidth="1.5" />
          </svg>
        </div>
      </div>
    </div>
  )
}

/* ---------- dialogs ---------- */

const CloseGlyph = () => (
  <svg viewBox="0 0 12 10" className="m-auto h-[10px] w-3">
    <path d="M2 1l8 8M10 1L2 9" strokeWidth="4" stroke="#4a5868" />
    <path d="M2 1l8 8M10 1L2 9" strokeWidth="2" stroke="#fff" />
  </svg>
)

function StockDialog() {
  return (
    <div className="absolute top-[327px] left-[420px] flex h-[278px] w-[459px] flex-col rounded-lg border border-[#3c5068] bg-linear-to-r from-[#d5e2f1] via-[#b3c9e4] to-[#c8daef] px-[6px] pb-[7px] text-black shadow-[0_0_5px_rgba(0,0,0,0.6),inset_0_0_0_1px_#eef4fb]">
      <div className="flex h-7 justify-between">
        <h2 className="pt-1 pl-px leading-5">股票选择</h2>
        <button aria-label="Close" className="h-[19px] w-[46px] rounded-b-md border border-t-0 border-[#7f94ac]">
          <CloseGlyph />
        </button>
      </div>
      <div className="flex flex-1 items-end justify-between border border-[#6d8096] bg-[#f0f0f0] px-[11px] pb-[10px]">
        <div className={clsx("h-[18px] w-[344px] border border-[#a0a0a0] pl-[2px] text-[10px] leading-[18px]", MONO)}>
          d:\tdx_pttqV (B)_vip\T0002\export\000014.TXT
        </div>
        <button className={clsx("h-[22px] w-[76px] leading-4", RAISED)}>键盘输入 &gt;&gt;</button>
      </div>
    </div>
  )
}

const columns: [string, string][] = [
  ["Date", "w-[36px]"], ["Open", "w-[36px]"], ["High", "w-[36px]"], ["Low", "w-[30px]"], ["Close", "w-[42px]"],
  ["Volume", "w-[48px]"], ["Skip", "w-[36px]"], ["Skip", "w-[36px]"], ["Skip", "w-[36px]"], ["Skip", "w-[36px]"], ["", ""],
]

function DateSelect({ value }: { value: string }) {
  return (
    <span className="relative block w-[59px]">
      <select
        aria-label={`日期格式 ${value}`}
        defaultValue={value}
        className={clsx("block h-[19px] w-full appearance-none border-t-2 border-l-2 border-[#858585] bg-white pl-[2px] text-[10px]", MONO)}
      >
        <option>{value}</option>
      </select>
      <span className={clsx("pointer-events-none absolute top-[2px] right-0 flex h-4 w-[17px] items-center justify-center", RAISED)}>
        <svg viewBox="0 0 8 4" className="h-1 w-2"><path d="M0 0h8L4 4z" /></svg>
      </span>
    </span>
  )
}

function Check({ label, checked }: { label: string; checked?: boolean }) {
  return (
    <label className="flex h-4 w-[69px] items-center gap-[6px] whitespace-nowrap">
      <span className="relative h-[11px] w-[11px]">
        <input type="checkbox" defaultChecked={checked} className="peer block h-[11px] w-[11px] appearance-none border-t-2 border-l-2 border-[#858585] bg-white" />
        <svg viewBox="0 0 11 11" className="pointer-events-none absolute inset-0 hidden h-[11px] w-[11px] peer-checked:block">
          <path d="M3 6l2 2 4-4" fill="none" stroke="#000" strokeWidth="2" />
        </svg>
      </span>
      {label}
    </label>
  )
}

function AsciiDialog() {
  return (
    <div className="absolute top-[358px] left-[433px] flex w-[431px] flex-col rounded-lg border border-[#16294a] bg-linear-to-r from-[#a9c3e2] via-[#3a72bc] to-[#6d97cc] px-[6px] pb-[6px] text-black shadow-[0_0_8px_2px_rgba(0,0,0,0.7),inset_0_0_0_1px_#a8c8ec]">
      <div className="flex h-7 justify-between">
        <h2 className="pt-1 pl-px font-[family-name:'Open_Sans',sans-serif] text-[12px] leading-5">ASCII</h2>
        <button aria-label="Close" className="h-5 w-[47px] rounded-b-md border border-t-0 border-[#4a1414] bg-linear-to-b from-[#d88a80] via-[#b82a1c] to-[#d05a48]">
          <CloseGlyph />
        </button>
      </div>
      <form className="relative border border-[#d8e6f6] bg-[#f0f0f0] pt-[12px] pr-[10px] pb-[11px] pl-[11px] outline outline-[#203c68]">
        <div className="flex justify-between">
          <div>
            <div className="flex h-3 leading-3">
              <label htmlFor="path" className="w-[232px]">数据路径:</label>
              <label htmlFor="ext">属性:</label>
            </div>
            <div className="flex h-6 items-center">
              <input
                id="path"
                defaultValue="d:\tdx_pttqV (B)_vip\T0002\export\"
                className={clsx(
                  "h-5 w-[224px] border-2 border-[#e01c1c] bg-[linear-gradient(to_right,#3399ff_207px,#fff_207px)] pl-[2px] text-[10px] text-white",
                  MONO,
                )}
              />
              <button type="button" className={clsx("mr-[8px] ml-2 h-[18px] w-[19px] leading-3", RAISED)}>..</button>
              <input
                id="ext"
                defaultValue="TXT"
                className={clsx("h-6 w-[51px] border-2 border-[#e01c1c] bg-white pl-[2px] text-[10px] shadow-[inset_2px_2px_0_#858585]", MONO)}
              />
            </div>
            <div className="h-5 leading-5">数据格式:</div>
          </div>
          <div className="flex flex-col gap-[3px] *:h-[21px] *:w-[76px] *:leading-4">
            <button type="button" className={clsx(RAISED, "outline outline-[#666]")}>确定</button>
            <button type="button" className={RAISED}>取消</button>
          </div>
        </div>
        <div className="h-[34px] border-t-2 border-l border-[#858585] bg-white">
          <table className={clsx("w-full table-fixed border-collapse bg-[#f0f0f0] text-[10px]", MONO)}>
            <thead>
              <tr className="h-4 leading-4">
                {columns.map(([name, width], i) => (
                  <th key={i} className={clsx("border-r border-b border-[#a8a8a8] p-0 text-center font-normal", width)}>{name}</th>
                ))}
              </tr>
            </thead>
          </table>
        </div>
        <div className="h-[25px] pt-[5px] leading-5">日期格式:</div>
        <div className="flex gap-[10px]">
          {["YYYY", "MM", "DD"].map((value) => (
            <DateSelect key={value} value={value} />
          ))}
        </div>
        <div className="mt-px flex h-[22px] items-end justify-between">
          <div className="flex pl-px">
            <Check label="期货" checked />
            <Check label="股票选:" checked />
            <Check label="指数" checked />
            <Check label="打包" />
          </div>
          <button type="button" className={clsx("h-[22px] w-[76px] leading-4", RAISED)}>帮助</button>
        </div>
        <svg viewBox="0 0 10 54" className="pointer-events-none absolute top-[45px] left-[169px] h-[54px] w-[10px]">
          <path d="M5 0v52M1 45l4 8 4-8" fill="none" stroke="#e01c1c" strokeWidth="2" />
        </svg>
        <div className={clsx("absolute top-[100px] left-[90px] h-[26px] w-[269px] border-2 border-[#e01c1c] text-center text-[20px] leading-[21px] font-medium whitespace-nowrap text-[#e01c1c]", SERIF)}>
          大家改一下数据路径就可以了
        </div>
      </form>
    </div>
  )
}

export default function App() {
  return (
    <div className="relative flex min-h-screen flex-col overflow-hidden bg-black font-[family-name:'Liberation_Sans','Noto_Sans_CJK_SC',sans-serif] text-[12px] leading-4">
      <MenuBar />
      <Toolbar />
      <SiteLogo />
      <div className="flex flex-1">
        <SideTabs />
        <ChartArea />
        <SidePanel />
        <QuotePanel />
      </div>
      <Footer />
      <AppWindow />
      <StockDialog />
      <AsciiDialog />
    </div>
  )
}
